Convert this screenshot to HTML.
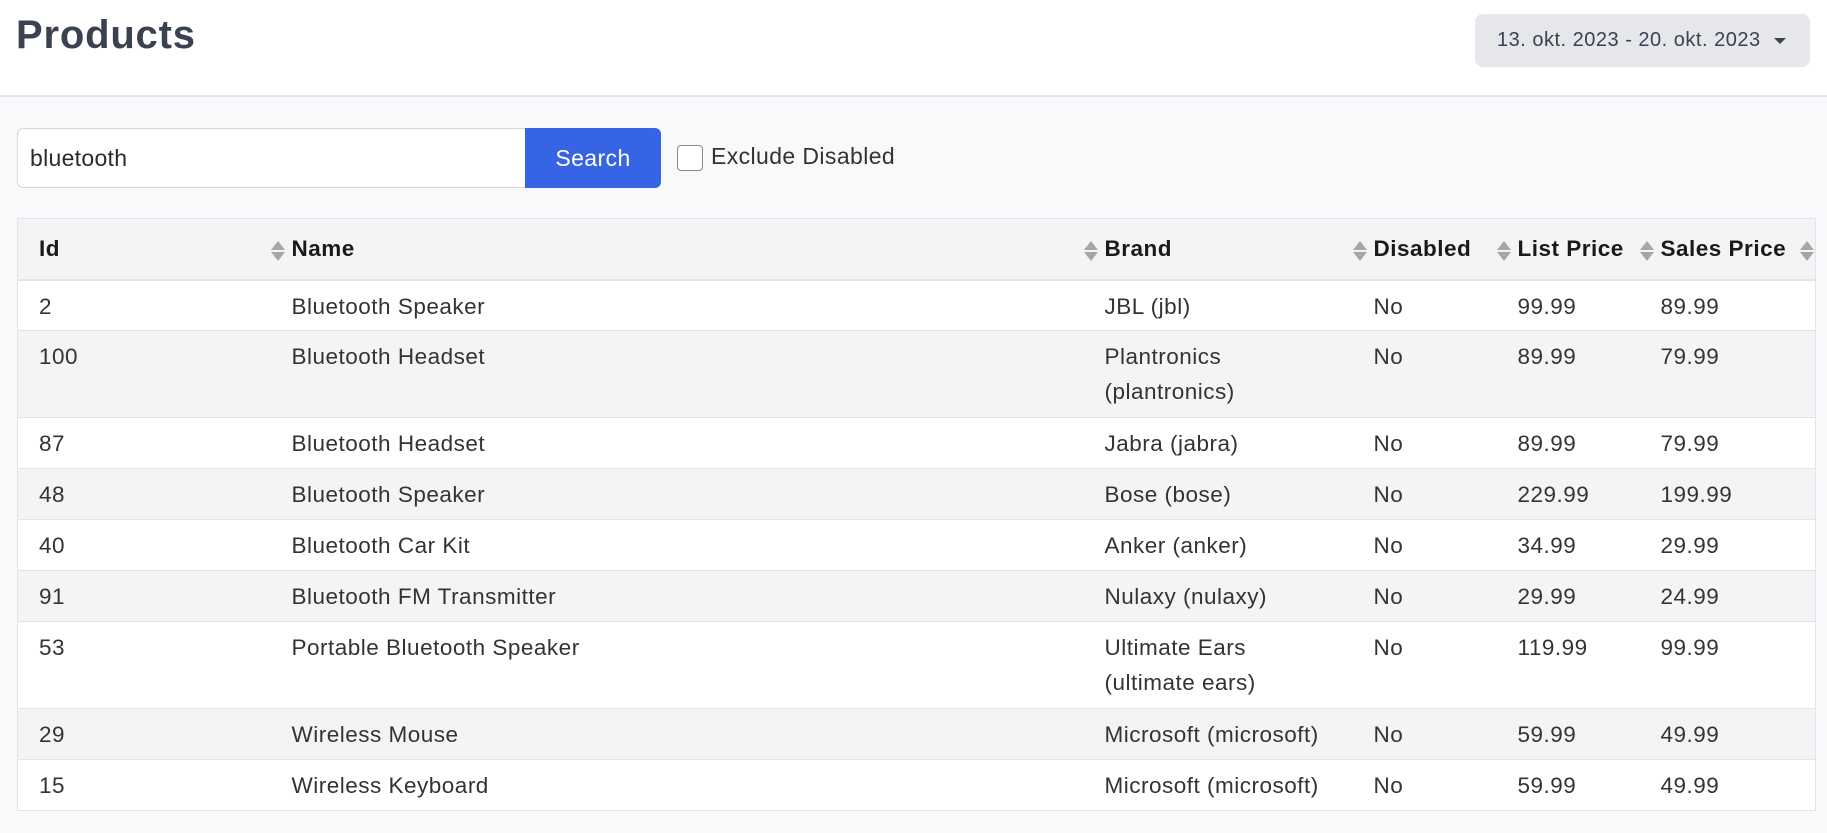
<!DOCTYPE html>
<html><head><meta charset="utf-8"><style>
*{box-sizing:border-box;margin:0;padding:0}
body{width:1827px;height:833px;background:#f8f9fa;font-family:"Liberation Sans","DejaVu Sans",sans-serif;color:#2b2b2b;overflow:hidden;position:relative}
.hdr{position:absolute;left:0;top:0;width:1827px;height:97px;background:#fff;border-bottom:2px solid #e6e7ea}
.title{position:absolute;left:16px;top:13px;font-size:40px;font-weight:bold;color:#3a4252;letter-spacing:0.8px}
.date{position:absolute;left:1475px;top:14px;width:335px;height:53px;background:#e5e7eb;border-radius:8px;font-size:20px;color:#3a4252;line-height:53px;padding-left:22px;letter-spacing:0.5px}
.date:after{content:"";position:absolute;right:24px;top:24px;border-left:6px solid transparent;border-right:6px solid transparent;border-top:6px solid #3a4252}
.inp{position:absolute;left:17px;top:128px;width:509px;height:60px;background:#fff;border:1px solid #d4d6db;border-radius:6px 0 0 6px;font-size:23px;line-height:58px;padding-left:12px;letter-spacing:0.3px}
.btn{position:absolute;left:525px;top:128px;width:136px;height:60px;background:#3764e4;border-radius:0 6px 6px 0;color:#fff;font-size:23px;line-height:60px;text-align:center;letter-spacing:0.4px}
.cb{position:absolute;left:677px;top:145px;width:26px;height:26px;border:1.5px solid #888;border-radius:4px;background:#fff}
.cbl{position:absolute;left:711px;top:143px;font-size:23px;color:#333;letter-spacing:0.4px}
table{position:absolute;left:17px;top:218px;width:1798px;border-collapse:collapse;table-layout:fixed;background:#fff;font-size:22.5px;letter-spacing:0.5px;border:1px solid #e3e4e7}
th{height:61px;background:#f3f4f6;text-align:left;font-weight:bold;color:#1a1a1a;padding-left:6px;position:relative;border-bottom:2px solid #e3e4e7}
th:first-child,td:first-child{padding-left:21px}
td{vertical-align:top;padding:8px 0 0 6px;line-height:35px;border-top:1px solid #e3e4e7;color:#333;white-space:nowrap}
tr.s td{background:#f3f4f6}
tr.h1 td{height:51px}tr.h2 td{height:87px}
.so{position:absolute;right:1px;top:22px;width:14px;height:20px}
.so:before{content:"";position:absolute;left:0;top:0;border-left:7px solid transparent;border-right:7px solid transparent;border-bottom:9px solid #a6a6a6}
.so:after{content:"";position:absolute;left:0;top:11px;border-left:7px solid transparent;border-right:7px solid transparent;border-top:9px solid #a6a6a6}
</style></head><body>
<div class="hdr"><div class="title">Products</div><div class="date">13. okt. 2023 - 20. okt. 2023</div></div>
<div class="inp">bluetooth</div><div class="btn">Search</div>
<div class="cb"></div><div class="cbl">Exclude Disabled</div>
<table>
<colgroup><col style="width:268px"><col style="width:813px"><col style="width:269px"><col style="width:144px"><col style="width:143px"><col style="width:161px"></colgroup>
<tr><th>Id<span class="so"></span></th><th>Name<span class="so"></span></th><th>Brand<span class="so"></span></th><th>Disabled<span class="so"></span></th><th>List Price<span class="so"></span></th><th>Sales Price<span class="so"></span></th></tr>
<tr class="h1"><td>2</td><td>Bluetooth Speaker</td><td>JBL (jbl)</td><td>No</td><td>99.99</td><td>89.99</td></tr>
<tr class="h2 s"><td>100</td><td>Bluetooth Headset</td><td>Plantronics<br>(plantronics)</td><td>No</td><td>89.99</td><td>79.99</td></tr>
<tr class="h1"><td>87</td><td>Bluetooth Headset</td><td>Jabra (jabra)</td><td>No</td><td>89.99</td><td>79.99</td></tr>
<tr class="h1 s"><td>48</td><td>Bluetooth Speaker</td><td>Bose (bose)</td><td>No</td><td>229.99</td><td>199.99</td></tr>
<tr class="h1"><td>40</td><td>Bluetooth Car Kit</td><td>Anker (anker)</td><td>No</td><td>34.99</td><td>29.99</td></tr>
<tr class="h1 s"><td>91</td><td>Bluetooth FM Transmitter</td><td>Nulaxy (nulaxy)</td><td>No</td><td>29.99</td><td>24.99</td></tr>
<tr class="h2"><td>53</td><td>Portable Bluetooth Speaker</td><td>Ultimate Ears<br>(ultimate ears)</td><td>No</td><td>119.99</td><td>99.99</td></tr>
<tr class="h1 s"><td>29</td><td>Wireless Mouse</td><td>Microsoft (microsoft)</td><td>No</td><td>59.99</td><td>49.99</td></tr>
<tr class="h1"><td>15</td><td>Wireless Keyboard</td><td>Microsoft (microsoft)</td><td>No</td><td>59.99</td><td>49.99</td></tr>
</table>
</body></html>
